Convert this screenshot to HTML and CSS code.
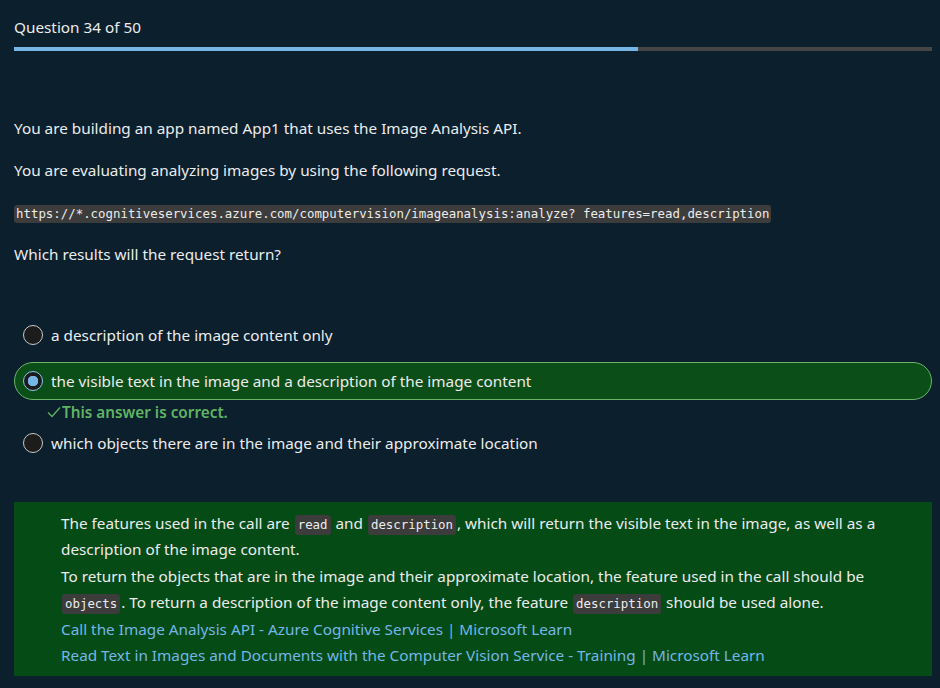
FILE: index.html
```html
<!DOCTYPE html>
<html lang="en">
<head>
<meta charset="utf-8">
<title>Question 34 of 50</title>
<link rel="stylesheet" href="styles.css">
</head>
<body>
<main class="page">
  <header class="head">
    <div class="counter">Question 34 of 50</div>
    <div class="progress"><div class="progress-fill" style="width: 68%"></div></div>
  </header>

  <section class="question">
    <p>You are building an app named App1 that uses the Image Analysis API.</p>
    <p>You are evaluating analyzing images by using the following request.</p>
    <p><code class="code">https://*.cognitiveservices.azure.com/computervision/imageanalysis:analyze? features=read,description</code></p>
    <p>Which results will the request return?</p>
  </section>

  <ul class="options">
    <li class="option"><span class="radio"></span><span>a description of the image content only</span></li>
    <li class="option selected"><span class="radio"></span><span>the visible text in the image and a description of the image content</span></li>
    <li class="feedback"><svg class="check" viewBox="0 0 14 12" width="14" height="12"><path d="M1 6.5 L5 10.5 L13 1.5" fill="none" stroke="currentColor" stroke-width="1.3"/></svg>This answer is correct.</li>
    <li class="option"><span class="radio"></span><span>which objects there are in the image and their approximate location</span></li>
  </ul>

  <section class="explain">
    <p>The features used in the call are <code class="chip">read</code> and <code class="chip">description</code>, which will return the visible text in the image, as well as a description of the image content.</p>
    <p>To return the objects that are in the image and their approximate location, the feature used in the call should be <code class="chip">objects</code>. To return a description of the image content only, the feature <code class="chip">description</code> should be used alone.</p>
    <p><a class="link" href="#">Call the Image Analysis API - Azure Cognitive Services | Microsoft Learn</a></p>
    <p><a class="link" href="#">Read Text in Images and Documents with the Computer Vision Service - Training | Microsoft Learn</a></p>
  </section>
</main>
</body>
</html>
```

FILE: styles.css
```css
* { box-sizing: border-box; }
html, body { margin: 0; padding: 0; background: #0b1f2d; }
body {
  font-family: "Noto Sans", "Open Sans", sans-serif;
  font-size: 15.3px;
  color: #ececec;
}
.page { padding: 0 8px 0 14px; }

.head { padding-top: 16px; }
.counter { line-height: 22px; }
.progress {
  margin-top: 9px;
  height: 4px;
  background: #454545;
}
.progress-fill { height: 4px; background: #75b6e7; }

.question { padding-top: 66px; }
.question p { margin: 0 0 20px; line-height: 22px; }

.code {
  display: inline-block;
  font-family: "DejaVu Sans Mono", "Liberation Mono", monospace;
  font-size: 12.4px;
  line-height: 18px;
  background: #3c3c3c;
  padding: 0 2px;
  border-radius: 3px;
}

.options { list-style: none; margin: 0; padding: 31px 0 0; }
.option {
  display: flex;
  align-items: center;
  gap: 8px;
  padding: 8px;
  border: 1px solid transparent;
  border-radius: 19px;
  line-height: 20px;
  margin-bottom: 8px;
}
.option.selected {
  background: #0b4e17;
  border-color: #6ab56a;
  margin-bottom: 2px;
}
.radio {
  flex: none;
  width: 20px;
  height: 20px;
  border-radius: 50%;
  background: #1c1c1c;
  border: 1px solid #c8c8c8;
}
.selected .radio {
  border: 1px solid #8cc4ee;
  background: radial-gradient(circle, #75b6e7 0 5px, #1c1c1c 5.5px);
}
.feedback {
  display: flex;
  align-items: center;
  padding-left: 33px;
  line-height: 20px;
  color: #5fb463;
  font-weight: 600;
  margin-bottom: 2px;
}
.check { margin-right: 1px; }

.explain {
  margin-top: 40px;
  background: #054b16;
  padding: 8px 50px 8px 47px;
}
.explain p { margin: 0; line-height: 26.4px; }
.chip {
  display: inline-block;
  font-family: "DejaVu Sans Mono", "Liberation Mono", monospace;
  font-size: 12.4px;
  line-height: 20px;
  background: #3c3c3c;
  padding: 0 3px;
  margin: 0 1px;
  border-radius: 3px;
}
.link { color: #75b6e7; text-decoration: none; }
```
